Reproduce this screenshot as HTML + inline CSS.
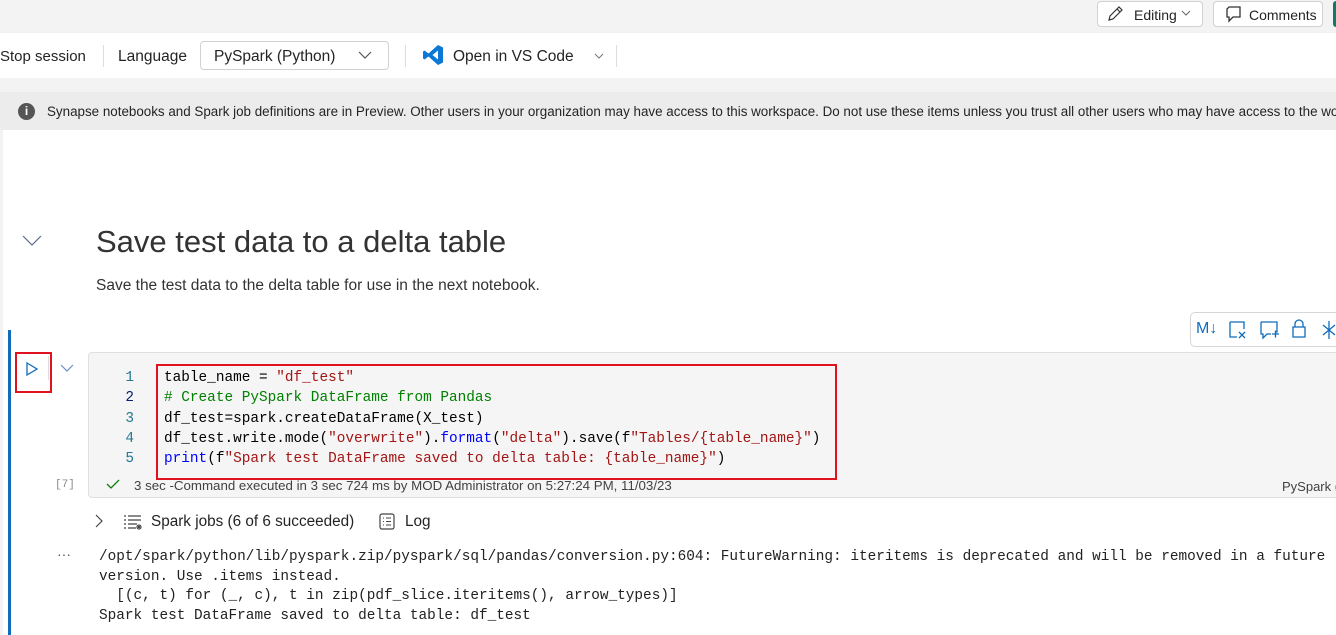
<!DOCTYPE html>
<html><head><meta charset="utf-8"><style>
*{margin:0;padding:0;box-sizing:border-box}
body{width:1336px;height:635px;overflow:hidden;background:#fff;font-family:"Liberation Sans",sans-serif;color:#242424;position:relative}
.a{position:absolute;white-space:nowrap}
.mono{font-family:"Liberation Mono",monospace;font-size:14.4px}
</style></head><body>
<div class="a" style="left:0;top:0;width:1336px;height:33px;background:#f3f3f3"></div>
<div class="a" style="left:1097px;top:1px;width:106px;height:26px;border:1px solid #d1d1d1;border-radius:4px;background:#fff"></div>
<svg class="a" style="left:1106px;top:5px" width="18" height="18" viewBox="0 0 18 18"><path d="M3 15l1-4L13 2l3 3-9 9z M11 4l3 3" fill="none" stroke="#333" stroke-width="1.2"/></svg>
<div class="a" style="left:1134px;top:7px;font-size:14px">Editing</div>
<svg class="a" style="left:1181px;top:10px" width="10" height="6"><path d="M1 1l4 4 4-4" fill="none" stroke="#666"/></svg>
<div class="a" style="left:1213px;top:1px;width:110px;height:26px;border:1px solid #d1d1d1;border-radius:4px;background:#fff"></div>
<svg class="a" style="left:1224px;top:4px" width="20" height="20"><path d="M5 3h11v10H9l-4 4v-4H3V5z" fill="none" stroke="#333" stroke-width="1.3"/></svg>
<div class="a" style="left:1249px;top:7px;font-size:14px">Comments</div>
<div class="a" style="left:1333px;top:1px;width:6px;height:26px;background:#117865;border-radius:3px"></div>

<div class="a" style="left:0;top:33px;width:1336px;height:45px;background:#fff;box-shadow:0 2px 3px rgba(0,0,0,.15)"></div>
<div class="a" style="left:0;top:48px;font-size:15px">Stop session</div>
<div class="a" style="left:103px;top:45px;width:1px;height:22px;background:#ddd"></div>
<div class="a" style="left:118px;top:48px;font-size:15.5px">Language</div>
<div class="a" style="left:200px;top:41px;width:189px;height:29px;border:1px solid #d1d1d1;border-radius:4px"></div>
<div class="a" style="left:214px;top:48px;font-size:15.5px">PySpark (Python)</div>
<svg class="a" style="left:358px;top:51px" width="14" height="9"><path d="M1 1l6 6 6-6" fill="none" stroke="#555" stroke-width="1.2"/></svg>
<div class="a" style="left:405px;top:45px;width:1px;height:22px;background:#ddd"></div>
<svg class="a" style="left:422px;top:44px" width="22" height="22" viewBox="0 0 22 22"><path d="M16 1l5 2.5v15L16 21 6.5 12.5 2.5 15.5 1 14.5V7.5L2.5 6.5l4 3L16 1zM16 6.5L10.5 11l5.5 4.5z" fill="#0a78d4"/></svg>
<div class="a" style="left:453px;top:48px;font-size:15.5px">Open in VS Code</div>
<svg class="a" style="left:594px;top:53px" width="10" height="6"><path d="M1 1l4 4 4-4" fill="none" stroke="#777"/></svg>
<div class="a" style="left:616px;top:45px;width:1px;height:22px;background:#ddd"></div>

<div class="a" style="left:0;top:78px;width:1336px;height:557px;background:#f3f3f3"></div>
<div class="a" style="left:0;top:92px;width:1336px;height:38px;background:#ececec"></div>
<div class="a" style="left:18px;top:103px;width:17px;height:17px;border-radius:50%;background:#555;color:#fff;font-size:12px;font-weight:bold;text-align:center;line-height:17px">i</div>
<div class="a" style="left:47px;top:104px;font-size:13.4px">Synapse notebooks and Spark job definitions are in Preview. Other users in your organization may have access to this workspace. Do not use these items unless you trust all other users who may have access to the workspace.</div>
<div class="a" style="left:3px;top:130px;width:1333px;height:505px;background:#fff"></div>

<svg class="a" style="left:22px;top:235px" width="20" height="11"><path d="M1 1l9 9 9-9" fill="none" stroke="#5a6b8a" stroke-width="1.2"/></svg>
<div class="a" style="left:96px;top:224px;font-size:31px;color:#333">Save test data to a delta table</div>
<div class="a" style="left:96px;top:277px;font-size:15.5px;color:#333">Save the test data to the delta table for use in the next notebook.</div>

<div class="a" style="left:1190px;top:312px;width:150px;height:35px;border:1px solid #d6d6d6;border-radius:5px;background:#fff"></div>
<div class="a" style="left:1196px;top:320px;font-size:16px;color:#0f6cbd">M↓</div>
<svg class="a" style="left:1228px;top:320px" width="20" height="20"><path d="M2 2h14v7M2 2v15h7" fill="none" stroke="#0f6cbd" stroke-width="1.3"/><path d="M11 12l6 6M17 12l-6 6" stroke="#0f6cbd" stroke-width="1.3"/></svg>
<svg class="a" style="left:1259px;top:320px" width="22" height="20"><path d="M2 2h16v10h-2M2 2v12h2v4l4-4h4" fill="none" stroke="#0f6cbd" stroke-width="1.3"/><path d="M13 14h7M16.5 10.5v7" stroke="#0f6cbd" stroke-width="1.3"/></svg>
<svg class="a" style="left:1291px;top:318px" width="16" height="22"><path d="M4 9V6a4 4 0 018 0v3M2 9h12v10H2z" fill="none" stroke="#0f6cbd" stroke-width="1.3"/></svg>
<svg class="a" style="left:1322px;top:320px" width="14" height="20"><path d="M7 1v18M1 5l12 10M13 5L1 15" stroke="#0f6cbd" stroke-width="1.3"/></svg>

<div class="a" style="left:8px;top:330px;width:3px;height:305px;background:#0f6cbd"></div>
<div class="a" style="left:15px;top:352px;width:37px;height:41px;border:2px solid #e0121e"></div>
<svg class="a" style="left:25px;top:361px" width="14" height="16"><path d="M2 2l10 6-10 6z" fill="none" stroke="#0f6cbd" stroke-width="1.3"/></svg>
<div class="a" style="left:48px;top:356px;width:1px;height:24px;background:#ddd"></div>
<svg class="a" style="left:60px;top:364px" width="14" height="8"><path d="M1 1l6 6 6-6" fill="none" stroke="#6a8ccc" stroke-width="1.2"/></svg>

<div class="a" style="left:88px;top:352px;width:1260px;height:146px;background:#f5f5f5;border:1px solid #e0e0e0;border-radius:4px"></div>
<div class="a mono" style="left:124px;top:368px;line-height:20.3px;color:#237893;text-align:right;width:10px">1<br><span style="color:#0b216f">2</span><br>3<br>4<br>5</div>
<div class="a" style="left:156px;top:364px;width:681px;height:116px;border:2px solid #e0121e"></div>
<div class="a mono" style="left:164px;top:368px;line-height:20.3px;color:#000">table_name = <span style="color:#a31515">"df_test"</span><br><span style="color:#008000"># Create PySpark DataFrame from Pandas</span><br>df_test=spark.createDataFrame(X_test)<br>df_test.write.mode(<span style="color:#a31515">"overwrite"</span>).<span style="color:#0000ff">format</span>(<span style="color:#a31515">"delta"</span>).save(f<span style="color:#a31515">"Tables/{table_name}"</span>)<br><span style="color:#0000ff">print</span>(f<span style="color:#a31515">"Spark test DataFrame saved to delta table: {table_name}"</span>)</div>
<div class="a mono" style="left:55px;top:479px;font-size:11px;color:#888">[7]</div>
<svg class="a" style="left:106px;top:479px" width="14" height="10"><path d="M1 5l4 4 8-8" fill="none" stroke="#107c10" stroke-width="1.3"/></svg>
<div class="a" style="left:134px;top:478px;font-size:13.3px;color:#424242">3 sec -Command executed in 3 sec 724 ms by MOD Administrator on 5:27:24 PM, 11/03/23</div>
<div class="a" style="left:1282px;top:479px;font-size:13px;color:#424242">PySpark (</div>

<svg class="a" style="left:95px;top:514px" width="9" height="14"><path d="M1 1l6 6-6 6" fill="none" stroke="#444" stroke-width="1.2"/></svg>
<svg class="a" style="left:123px;top:514px" width="20" height="16"><path d="M1 2h2M5 2h13M1 6h2M5 6h13M1 10h2M5 10h9M1 14h2M5 14h8" stroke="#444" stroke-width="1.2"/><path d="M16 10v6M13 13h6M14 11l4 4M18 11l-4 4" stroke="#444"/></svg>
<div class="a" style="left:151px;top:513px;font-size:15.3px">Spark jobs (6 of 6 succeeded)</div>
<svg class="a" style="left:379px;top:513px" width="16" height="17"><rect x="1" y="1" width="14" height="15" rx="2" fill="none" stroke="#444" stroke-width="1.2"/><path d="M4 5h1M7 5h5M4 8.5h1M7 8.5h5M4 12h1M7 12h5" stroke="#444"/></svg>
<div class="a" style="left:405px;top:513px;font-size:15.3px">Log</div>

<div class="a" style="left:57px;top:546px;font-size:14px;color:#555">···</div>
<div class="a mono" style="left:99px;top:548px;line-height:19.5px;color:#222">/opt/spark/python/lib/pyspark.zip/pyspark/sql/pandas/conversion.py:604: FutureWarning: iteritems is deprecated and will be removed in a future<br>version. Use .items instead.<br>&nbsp;&nbsp;[(c, t) for (_, c), t in zip(pdf_slice.iteritems(), arrow_types)]<br>Spark test DataFrame saved to delta table: df_test</div>
</body></html>
